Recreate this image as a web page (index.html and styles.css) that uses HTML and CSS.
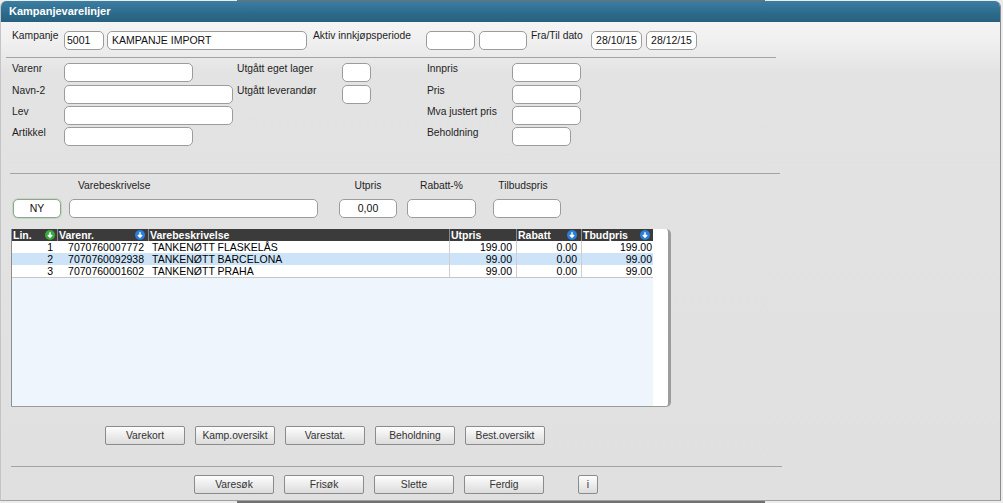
FILE: index.html
```html
<!DOCTYPE html>
<html lang="no">
<head>
<meta charset="utf-8">
<title>Kampanjevarelinjer</title>
<link rel="stylesheet" href="styles.css">
</head>
<body>
<div class="backwin"></div>
<div class="dialog">
  <div class="titlebar">Kampanjevarelinjer</div>
  <div class="content">
    <div class="row1">
      <span class="lbl w52">Kampanje</span>
      <div class="inp w40">5001</div>
      <div class="inp w200 ml3 pl4">KAMPANJE IMPORT</div>
      <span class="lbl w113 ml6">Aktiv innkjøpsperiode</span>
      <div class="inp w49"></div>
      <div class="inp w48 ml4"></div>
      <span class="lbl w60 ml4">Fra/Til dato</span>
      <div class="inp w51 center">28/10/15</div>
      <div class="inp w51 ml4 center">28/12/15</div>
    </div>
    <div class="sep sep1"></div>

    <div class="form2">
      <span class="lbl">Varenr</span>
      <div><div class="inp w129"></div></div>
      <span class="lbl">Utgått eget lager</span>
      <div><div class="inp w29"></div></div>
      <span class="lbl">Innpris</span>
      <div><div class="inp w69"></div></div>

      <span class="lbl">Navn-2</span>
      <div><div class="inp w169"></div></div>
      <span class="lbl">Utgått leverandør</span>
      <div><div class="inp w29"></div></div>
      <span class="lbl">Pris</span>
      <div><div class="inp w69"></div></div>

      <span class="lbl">Lev</span>
      <div><div class="inp w169"></div></div>
      <span></span>
      <span></span>
      <span class="lbl">Mva justert pris</span>
      <div><div class="inp w69"></div></div>

      <span class="lbl">Artikkel</span>
      <div><div class="inp w129"></div></div>
      <span></span>
      <span></span>
      <span class="lbl">Beholdning</span>
      <div><div class="inp w59"></div></div>
    </div>
    <div class="sep sep2"></div>

    <div class="labels3">
      <span class="w48"></span>
      <span class="w249 ml8 pl9">Varebeskrivelse</span>
      <span class="w58 ml21 center">Utpris</span>
      <span class="w69 ml10 center">Rabatt-%</span>
      <span class="w68 ml17 center pr8">Tilbudspris</span>
    </div>
    <div class="row3">
      <div class="inp w48 center ny">NY</div>
      <div class="inp w249 ml8"></div>
      <div class="inp w58 ml21 center">0,00</div>
      <div class="inp w69 ml10"></div>
      <div class="inp w68 ml17"></div>
    </div>

    <div class="grid">
      <div class="gmain">
        <div class="grow ghead">
          <div class="hc pr2">Lin.<svg class="ico" viewBox="0 0 10 10"><circle cx="5" cy="5" r="5" fill="#3da83d"/><path d="M5 2.2v4.6M2.9 4.9L5 7.1 7.1 4.9" stroke="#fff" stroke-width="1.5" fill="none"/></svg></div>
          <div class="hc pr3">Varenr.<svg class="ico" viewBox="0 0 10 10"><circle cx="5" cy="5" r="5" fill="#2a7fd8"/><path d="M5 2.2v4.6M2.9 4.9L5 7.1 7.1 4.9" stroke="#fff" stroke-width="1.5" fill="none"/></svg></div>
          <div class="hc">Varebeskrivelse</div>
          <div class="hc">Utpris</div>
          <div class="hc pr4">Rabatt<svg class="ico" viewBox="0 0 10 10"><circle cx="5" cy="5" r="5" fill="#2a7fd8"/><path d="M5 2.2v4.6M2.9 4.9L5 7.1 7.1 4.9" stroke="#fff" stroke-width="1.5" fill="none"/></svg></div>
          <div class="hc pr3">Tbudpris<svg class="ico" viewBox="0 0 10 10"><circle cx="5" cy="5" r="5" fill="#2a7fd8"/><path d="M5 2.2v4.6M2.9 4.9L5 7.1 7.1 4.9" stroke="#fff" stroke-width="1.5" fill="none"/></svg></div>
        </div>
        <div class="grow drow">
          <div class="dc r pr4">1</div>
          <div class="dc r pr4">7070760007772</div>
          <div class="dc pl4">TANKENØTT FLASKELÅS</div>
          <div class="dc r pr4 vl">199.00</div>
          <div class="dc r pr4 vl">0.00</div>
          <div class="dc r pr1 vl">199.00</div>
        </div>
        <div class="grow drow sel">
          <div class="dc r pr4">2</div>
          <div class="dc r pr4">7070760092938</div>
          <div class="dc pl4">TANKENØTT BARCELONA</div>
          <div class="dc r pr4 vl">99.00</div>
          <div class="dc r pr4 vl">0.00</div>
          <div class="dc r pr1 vl">99.00</div>
        </div>
        <div class="grow drow">
          <div class="dc r pr4">3</div>
          <div class="dc r pr4">7070760001602</div>
          <div class="dc pl4">TANKENØTT PRAHA</div>
          <div class="dc r pr4 vl">99.00</div>
          <div class="dc r pr4 vl">0.00</div>
          <div class="dc r pr1 vl">99.00</div>
        </div>
        <div class="gfill"></div>
      </div>
      <div class="gside"></div>
    </div>

    <div class="btnrow btnrow1">
      <div class="btn">Varekort</div>
      <div class="btn">Kamp.oversikt</div>
      <div class="btn">Varestat.</div>
      <div class="btn">Beholdning</div>
      <div class="btn">Best.oversikt</div>
    </div>
    <div class="sep sep3"></div>
    <div class="btnrow btnrow2">
      <div class="btn">Varesøk</div>
      <div class="btn">Frisøk</div>
      <div class="btn">Slette</div>
      <div class="btn">Ferdig</div>
      <div class="btn btn-i">i</div>
    </div>
  </div>
</div>
</body>
</html>
```
FILE: styles.css
```css
html, body {
  margin: 0;
  height: 100%;
}
body {
  background: #ececec;
  font-family: "Liberation Sans", Arial, sans-serif;
  font-size: 10.3px;
  color: #1e1e1e;
  position: relative;
  overflow: hidden;
}
.backwin {
  position: absolute;
  left: 237px;
  top: 0;
  width: 528px;
  height: 503px;
  background: #707070;
}
.dialog {
  position: relative;
  z-index: 1;
  margin-top: 1px;
  width: 1001px;
  height: 500px;
  box-sizing: border-box;
  border-right: 1px solid #8c8c8c;
  border-bottom: 1px solid #a0a0a0;
  border-left: 1px solid #c4c4c4;
  border-radius: 6px 6px 0 0;
  background: linear-gradient(#f4f4f4 22px, #f0f0f0 40px, #e3e3e3 72px, #e0e0e0);
  overflow: hidden;
  display: flex;
  flex-direction: column;
}
.titlebar {
  flex: none;
  height: 21px;
  line-height: 21px;
  padding-left: 9px;
  margin-left: -1px;
  background: linear-gradient(#3b7fa3, #2c6a8b 60%, #28607f);
  color: #fff;
  font-weight: bold;
  font-size: 11px;
}
.content {
  flex: 1;
  display: flex;
  flex-direction: column;
  margin-left: -1px;
}

.lbl { line-height: 12px; white-space: nowrap; }
.inp {
  height: 19px;
  box-sizing: border-box;
  border: 1px solid #9c9c9c;
  border-radius: 5px;
  background: #fff;
  font-size: 10.5px;
  line-height: 17px;
  padding: 0 2px;
  white-space: nowrap;
  overflow: hidden;
  color: #111;
}
.center { text-align: center; }
.w29 { width: 29px; } .w40 { width: 40px; } .w48 { width: 48px; } .w49 { width: 49px; }
.w51 { width: 51px; } .w52 { width: 52px; } .w58 { width: 58px; } .w59 { width: 59px; }
.w60 { width: 60px; } .w68 { width: 68px; } .w69 { width: 69px; } .w113 { width: 113px; }
.w129 { width: 129px; } .w169 { width: 169px; } .w200 { width: 200px; } .w249 { width: 249px; }
.ml3 { margin-left: 3px; } .ml4 { margin-left: 4px; } .ml6 { margin-left: 6px; } .ml8 { margin-left: 8px; }
.ml10 { margin-left: 10px; } .ml17 { margin-left: 17px; } .ml21 { margin-left: 21px; }
.pl4 { padding-left: 4px; } .pl9 { padding-left: 9px; } .pr8 { padding-right: 8px; }
.w48, .w249, .w58, .w69, .w68 { box-sizing: border-box; flex: none; }

.row1 {
  display: flex;
  align-items: flex-start;
  margin-top: 9px;
  padding-left: 12px;
  height: 19px;
}
.row1 .lbl { margin-top: -1px; flex: none; }
.row1 .inp { flex: none; }

.sep { height: 0; border-top: 1px solid #a3a3a3; }
.sep1 { margin: 7px 0 0 6px; width: 770px; }
.sep2 { margin: 25px 0 0 10px; width: 770px; }
.sep3 { margin: 21px 0 0 11px; width: 771px; }

.form2 {
  display: grid;
  grid-template-columns: 52px 173px 105px 85px 85px 80px;
  grid-template-rows: 22px 21px 21px 21px;
  margin-top: 5px;
  padding-left: 12px;
}

.labels3 {
  display: flex;
  margin-top: 6px;
  padding-left: 13px;
  line-height: 12px;
  height: 12px;
  white-space: nowrap;
}
.row3 {
  display: flex;
  margin-top: 7px;
  padding-left: 13px;
  height: 19px;
}
.ny { box-shadow: 0 0 0 1px rgba(110, 220, 110, 0.35); }

.grid {
  margin: 11px 0 0 11px;
  width: 660px;
  height: 178px;
  box-sizing: border-box;
  border-left: 1px solid #8e8e8e;
  border-bottom: 1px solid #9a9a9a;
  border-right: 3px solid #9c9c9c;
  border-radius: 0 5px 5px 0;
  display: flex;
  overflow: hidden;
  font-size: 10.5px;
}
.gmain {
  width: 641px;
  display: flex;
  flex-direction: column;
}
.gside { flex: 1; background: #fff; }
.grow {
  display: grid;
  grid-template-columns: 45px 91px 301px 67px 65px 72px;
  height: 12px;
  line-height: 12px;
}
.ghead { background: #3b3b3b; color: #fff; font-weight: bold; }
.hc {
  display: flex;
  align-items: center;
  justify-content: space-between;
  padding-left: 1px;
  border-left: 1px solid #8a8a8a;
  white-space: nowrap;
  overflow: hidden;
}
.hc:first-child { border-left: none; }
.ico { width: 10px; height: 10px; flex: none; }
.pr1 { padding-right: 1px; } .pr2 { padding-right: 2px; } .pr3 { padding-right: 3px; } .pr4 { padding-right: 4px; }
.drow { background: #fff; color: #000; }
.drow.sel { background: #cde4f8; }
.dc { white-space: nowrap; overflow: hidden; box-sizing: border-box; }
.dc.r { text-align: right; }
.dc.vl { border-left: 1px solid #cfcfcf; }
.gfill { flex: 1; background: #eef5fd; border-top: 1px solid #c6c6c6; }

.btnrow { display: flex; gap: 10px; height: 19px; }
.btnrow1 { margin-top: 19px; padding-left: 105px; }
.btnrow2 { margin-top: 8px; padding-left: 194px; }
.btn {
  width: 80px;
  height: 19px;
  box-sizing: border-box;
  border: 1px solid #8b8b8b;
  border-radius: 2px;
  background: linear-gradient(#fdfdfd, #eeeeee 45%, #dcdcdc);
  color: #333;
  display: flex;
  align-items: center;
  justify-content: center;
  white-space: nowrap;
}
.btn-i { width: 20px; margin-left: 24px; }
```
